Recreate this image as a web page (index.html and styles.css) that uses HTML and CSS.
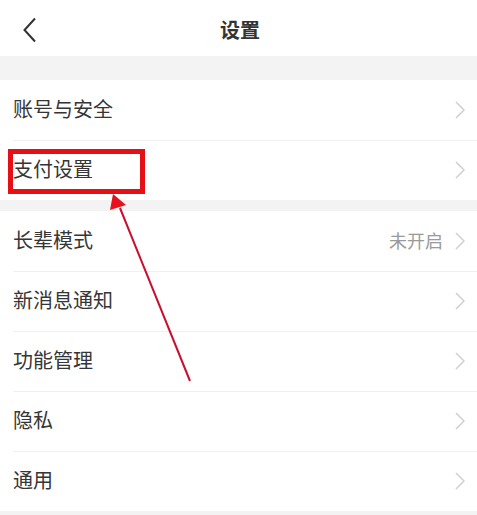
FILE: index.html
```html
<!DOCTYPE html>
<html lang="zh">
<head>
<meta charset="utf-8">
<link rel="stylesheet" href="styles.css">
</head>
<body>
<div class="page">
  <header class="topbar">
    <svg class="back" width="16" height="26" viewBox="0 0 16 26"><path d="M13 1.5 L2.5 13 L13 24.5" fill="none" stroke="#333" stroke-width="2"/></svg>
    <h1 class="title">设置</h1>
  </header>
  <div class="gap gap-top"></div>
  <section class="group">
    <div class="row"><span class="label">账号与安全</span><svg class="chev" width="10" height="18" viewBox="0 0 10 18"><path d="M1 1 L9 9 L1 17" fill="none" stroke="#cfcfcf" stroke-width="1.5"/></svg></div>
    <div class="row"><span class="label">支付设置</span><svg class="chev" width="10" height="18" viewBox="0 0 10 18"><path d="M1 1 L9 9 L1 17" fill="none" stroke="#cfcfcf" stroke-width="1.5"/></svg></div>
  </section>
  <div class="gap gap-mid"></div>
  <section class="group">
    <div class="row"><span class="label">长辈模式</span><span class="value">未开启</span><svg class="chev" width="10" height="18" viewBox="0 0 10 18"><path d="M1 1 L9 9 L1 17" fill="none" stroke="#cfcfcf" stroke-width="1.5"/></svg></div>
    <div class="row"><span class="label">新消息通知</span><svg class="chev" width="10" height="18" viewBox="0 0 10 18"><path d="M1 1 L9 9 L1 17" fill="none" stroke="#cfcfcf" stroke-width="1.5"/></svg></div>
    <div class="row"><span class="label">功能管理</span><svg class="chev" width="10" height="18" viewBox="0 0 10 18"><path d="M1 1 L9 9 L1 17" fill="none" stroke="#cfcfcf" stroke-width="1.5"/></svg></div>
    <div class="row"><span class="label">隐私</span><svg class="chev" width="10" height="18" viewBox="0 0 10 18"><path d="M1 1 L9 9 L1 17" fill="none" stroke="#cfcfcf" stroke-width="1.5"/></svg></div>
    <div class="row"><span class="label">通用</span><svg class="chev" width="10" height="18" viewBox="0 0 10 18"><path d="M1 1 L9 9 L1 17" fill="none" stroke="#cfcfcf" stroke-width="1.5"/></svg></div>
  </section>
  <div class="highlight"></div>
  <svg class="arrow" width="477" height="515" viewBox="0 0 477 515">
    <line x1="190" y1="381" x2="120" y2="208" stroke="#c8102e" stroke-width="2"/>
    <polygon points="113,194 126,205 110,210" fill="#e8101c"/>
  </svg>
</div>
</body>
</html>
```
FILE: styles.css
```css
* { box-sizing: border-box; }
html, body { margin: 0; padding: 0; }
body {
  background: #f3f3f3;
  font-family: "Noto Sans CJK SC", "Noto Sans", sans-serif;
  color: #333;
}
.page {
  position: relative;
  width: 477px;
  height: 515px;
  overflow: hidden;
}
.topbar {
  position: relative;
  height: 56px;
  background: #fff;
  display: flex;
  align-items: center;
  justify-content: center;
}
.back {
  position: absolute;
  left: 22px;
  top: 17px;
}
.title {
  margin: 2px 0 0 0;
  font-size: 20px;
  font-weight: 700;
  color: #333;
  padding-left: 3px;
}
.gap { background: #f3f3f3; }
.gap-top { height: 24px; }
.gap-mid { height: 11px; }
.group { background: #fff; }
.row {
  height: 60px;
  display: flex;
  align-items: center;
  padding: 0 12px 0 13px;
  position: relative;
}
.row + .row::before {
  content: "";
  position: absolute;
  left: 13px;
  right: 0;
  top: 0;
  border-top: 1px solid #f0f0f0;
}
.label {
  font-size: 20px;
  line-height: 1;
  color: #363636;
  flex: 1;
  margin-top: -2px;
}
.value {
  font-size: 18px;
  line-height: 1;
  color: #9a9a9a;
  margin-right: 12px;
  margin-top: -2px;
}
.chev {
  display: block;
  flex: none;
}
.highlight {
  position: absolute;
  left: 8px;
  top: 149px;
  width: 137px;
  height: 45px;
  border: 5px solid #e60f16;
}
.arrow {
  position: absolute;
  left: 0;
  top: 0;
  pointer-events: none;
}
```
